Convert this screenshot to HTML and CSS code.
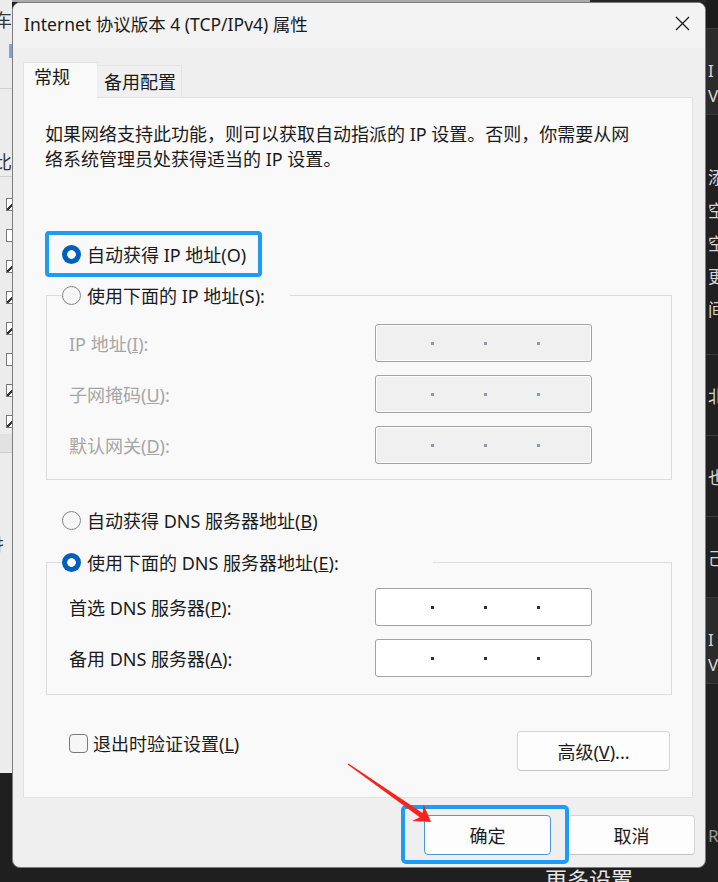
FILE: index.html
```html
<!DOCTYPE html>
<html lang="zh-CN">
<head>
    <meta charset="UTF-8">
    <meta name="viewport" content="width=device-width, initial-scale=1.0">
    <title>Internet 协议版本 4 (TCP/IPv4) 属性</title>
    <link rel="stylesheet" href="styles.css">
</head>
<body>
    <div class="screen">
        <div class="side side-left">
            <div class="bg-glyph g-top">车</div>
            <div class="bg-mark"></div>
            <div class="bg-line"></div>
            <div class="bg-glyph g-bi">比</div>
            <div class="bg-line tight"></div>
            <div class="bg-checks">
                <span class="bg-check on"></span>
                <span class="bg-check"></span>
                <span class="bg-check on"></span>
                <span class="bg-check on"></span>
                <span class="bg-check on"></span>
                <span class="bg-check"></span>
                <span class="bg-check on"></span>
                <span class="bg-check on"></span>
            </div>
            <div class="bg-band"></div>
            <div class="bg-glyph g-hand">扌</div>
        </div>

        <div class="middle">
            <div class="topline"></div>
            <div class="dialog">
                <div class="titlebar">
                    <span class="title">Internet 协议版本 4 (TCP/IPv4) 属性</span>
                    <svg class="close" width="15" height="15" viewBox="0 0 15 15">
                        <path d="M1 1 L14 14 M14 1 L1 14" stroke="#1b1b1b" stroke-width="1.3" fill="none"/>
                    </svg>
                </div>

                <div class="dialog-body">
                    <div class="tabs">
                        <div class="tab active">常规</div>
                        <div class="tab">备用配置</div>
                    </div>

                    <div class="panel">
                        <p class="desc">如果网络支持此功能，则可以获取自动指派的 IP 设置。否则，你需要从网<br>络系统管理员处获得适当的 IP 设置。</p>

                        <div class="hl-box">
                            <label class="radio-row"><span class="radio checked"></span><span>自动获得 IP 地址(O)</span></label>
                        </div>

                        <fieldset class="group disabled">
                            <legend><label class="radio-row"><span class="radio"></span><span>使用下面的 IP 地址(S):</span></label></legend>
                            <div class="fields">
                                <span class="field-label">IP 地址(<u>I</u>):</span>
                                <div class="ip"><i></i><i></i><i></i></div>
                                <span class="field-label">子网掩码(<u>U</u>):</span>
                                <div class="ip"><i></i><i></i><i></i></div>
                                <span class="field-label">默认网关(<u>D</u>):</span>
                                <div class="ip"><i></i><i></i><i></i></div>
                            </div>
                        </fieldset>

                        <label class="radio-row standalone"><span class="radio"></span><span>自动获得 DNS 服务器地址(<u>B</u>)</span></label>

                        <fieldset class="group dns">
                            <legend><label class="radio-row"><span class="radio checked"></span><span>使用下面的 DNS 服务器地址(<u>E</u>):</span></label></legend>
                            <div class="fields">
                                <span class="field-label">首选 DNS 服务器(<u>P</u>):</span>
                                <div class="ip"><i></i><i></i><i></i></div>
                                <span class="field-label">备用 DNS 服务器(<u>A</u>):</span>
                                <div class="ip"><i></i><i></i><i></i></div>
                            </div>
                        </fieldset>

                        <div class="panel-bottom">
                            <label class="check-row"><span class="checkbox"></span><span>退出时验证设置(<u>L</u>)</span></label>
                            <button class="btn btn-adv">高级(<u>V</u>)...</button>
                        </div>
                    </div>

                    <div class="footer">
                        <button class="btn btn-ok">确定</button>
                        <button class="btn">取消</button>
                    </div>
                </div>
            </div>
            <div class="under">更多设置</div>
        </div>

        <div class="side side-right">
            <div class="r-block r-dark"></div>
            <div class="r-block r-card"><span>I</span><span>Vi</span></div>
            <div class="r-block r-list"><span>添</span><span>空</span><span>空</span><span>更</span><span>间</span></div>
            <div class="r-block r-item"><span>北</span></div>
            <div class="r-block r-item"><span>也</span></div>
            <div class="r-block r-item"><span>己</span></div>
            <div class="r-block r-card"><span>I</span><span>Vi</span></div>
            <div class="r-block r-foot"><span>Re</span></div>
        </div>

        <svg class="arrow" width="718" height="882" viewBox="0 0 718 882">
            <polygon points="347.6,764.5 419.7,817.2 412.2,821 431,822 423.6,804.6 422.6,813.1 348.4,763.5" fill="#f7231c"/>
        </svg>
    </div>
</body>
</html>
```

FILE: styles.css
```css
body {
    margin: 0;
    background: #1f1f1f;
    font-family: "Noto Sans", "Noto Sans CJK SC", sans-serif;
    font-size: 18px;
    color: #1b1b1b;
    overflow: hidden;
}
.screen {
    position: relative;
    display: flex;
    width: 718px;
    height: 882px;
    overflow: hidden;
}

/* window behind the dialog */
.side {
    width: 12px;
    flex: none;
    overflow: hidden;
}
.side-left {
    height: 773px;
    background: #ececec;
    color: #333;
}
.bg-glyph {
    font-size: 18px;
    line-height: 24px;
    margin-left: -6px;
}
.g-top {
    margin-top: 8px;
}
.bg-mark {
    width: 4px;
    height: 14px;
    margin: 12px 0 0 9px;
    background: #7aa7d4;
}
.bg-line {
    height: 1px;
    background: #cfcfcf;
    margin-top: 30px;
}
.bg-line.tight {
    margin-top: 2px;
}
.g-bi {
    margin-top: 61px;
}
.bg-checks {
    display: flex;
    flex-direction: column;
    gap: 18px;
    margin-top: 21px;
}
.bg-check {
    width: 12px;
    height: 13px;
    margin-left: 6px;
    box-sizing: border-box;
    border: 1px solid #777;
    background: #fff;
}
.bg-check.on {
    background: linear-gradient(135deg, #fff 45%, #333 46% 60%, #fff 61%);
}
.bg-band {
    height: 18px;
    margin-top: 6px;
    background: #e2e2e2;
    border-bottom: 1px solid #cfcfcf;
}
.g-hand {
    margin-top: 80px;
}

.side-right {
    background: #202020;
    color: #d6d6d6;
    display: flex;
    flex-direction: column;
}
.r-block {
    display: flex;
    flex-direction: column;
    padding-left: 2px;
    font-size: 17px;
    border-bottom: 1px solid #3a3a3a;
}
.r-dark {
    height: 28px;
    background: #1b1b1b;
}
.r-card {
    height: 86px;
    box-sizing: border-box;
    padding-top: 22px;
    background: #2b2b2b;
    justify-content: center;
    line-height: 25px;
}
.r-list {
    height: 240px;
    gap: 11px;
    padding-top: 52px;
    box-sizing: border-box;
    line-height: 22px;
}
.r-item {
    height: 80px;
    justify-content: center;
}
.r-foot {
    flex: 1;
    padding-top: 140px;
    border: none;
    color: #9a9a9a;
}

.middle {
    width: 694px;
    flex: none;
    display: flex;
    flex-direction: column;
}
.topline {
    height: 2px;
    background: linear-gradient(to right, #ababab 0 578px, #262626 578px);
}
.under {
    height: 14px;
    overflow: hidden;
    padding-left: 533px;
    font-size: 22px;
    line-height: 22px;
    color: #e6e6e6;
}

/* dialog */
.dialog {
    height: 866px;
    box-sizing: border-box;
    border: 1px solid #7d7d7d;
    border-radius: 8px;
    background: #efefef;
    overflow: hidden;
    display: flex;
    flex-direction: column;
}
.titlebar {
    height: 45px;
    flex: none;
    box-sizing: border-box;
    background: #f3f3f3;
    display: flex;
    align-items: center;
    justify-content: space-between;
    padding: 0 15px 4px 11px;
}
.title {
    font-size: 17.5px;
    color: #1a1a1a;
}
.dialog-body {
    flex: 1;
    padding: 0 12px 0 10px;
}
.tabs {
    display: flex;
    align-items: flex-end;
    padding-top: 14px;
    margin-bottom: -1px;
    position: relative;
    z-index: 1;
}
.tab {
    box-sizing: border-box;
    border: 1px solid #e4e4e4;
    border-bottom: none;
    line-height: 26px;
}
.tab.active {
    width: 75px;
    height: 36px;
    padding: 1px 0 0 10px;
    background: #f9f9f9;
}
.tab:not(.active) {
    width: 85px;
    height: 33px;
    padding: 3px 0 0 7px;
    margin-left: -1px;
    border-left: none;
    background: #f0f0f0;
    border-bottom: 1px solid #e4e4e4;
}

.panel {
    background: #f9f9f9;
    border: 1px solid #e2e2e2;
    padding: 24px 20px 26px 21px;
}
.desc {
    margin: 0;
    line-height: 25px;
}

.radio-row {
    display: flex;
    align-items: center;
    gap: 6px;
    height: 26px;
    white-space: nowrap;
}
.radio {
    width: 19px;
    height: 19px;
    flex: none;
    box-sizing: border-box;
    border-radius: 50%;
    border: 1px solid #888;
    background: #f6f6f6;
}
.radio.checked {
    border: none;
    background: radial-gradient(circle, #fff 0 4px, #005fb8 4.6px);
}
.hl-box {
    width: fit-content;
    margin-top: 59px;
    padding: 6px 12px 6px 13px;
    border: 4px solid #1e9bf2;
    border-radius: 4px;
}

.group {
    margin: 5px 0 0 1px;
    padding: 16px 0 15px 22px;
    border: 1px solid #dcdcdc;
}
.group legend {
    width: 228px;
    padding: 0;
    margin-left: -7px;
}
.group.dns {
    margin-top: 16px;
    padding-top: 13px;
    padding-bottom: 17px;
}
.group.dns legend {
    width: 371px;
}
.standalone {
    margin: 27px 0 0 17px;
}
.fields {
    display: grid;
    grid-template-columns: 306px 217px;
    grid-auto-rows: 38px;
    row-gap: 13px;
    align-items: center;
}
.ip {
    height: 38px;
    box-sizing: border-box;
    border: 1px solid #a2a2a2;
    border-radius: 3px;
    background: #fff;
    display: flex;
    align-items: center;
    gap: 50px;
    padding-left: 55px;
}
.ip i {
    width: 3px;
    height: 3px;
    background: #2d2d3d;
}
.disabled .field-label {
    color: #a6a6a6;
}
.disabled .ip {
    background: #f0f0f0;
    box-shadow: inset 0 0 0 1px #fdfdfd;
}
.disabled .ip i {
    background: #8f9aa8;
}

.panel-bottom {
    display: flex;
    justify-content: space-between;
    align-items: flex-start;
    margin-top: 35px;
}
.check-row {
    display: flex;
    align-items: center;
    gap: 5px;
    height: 26px;
    margin-left: 24px;
}
.checkbox {
    width: 19px;
    height: 19px;
    box-sizing: border-box;
    border: 1px solid #7a7a7a;
    border-radius: 4px;
    background: #f6f6f6;
}

.btn {
    font: inherit;
    color: #1b1b1b;
    height: 40px;
    padding: 0;
    background: #fdfdfd;
    border: 1px solid #d6d6d6;
    border-bottom-color: #c4c4c4;
    border-radius: 4px;
}
.btn-adv {
    width: 153px;
    margin: 1px 2px 0 0;
}
.footer {
    display: flex;
    justify-content: flex-end;
    gap: 17px;
    padding: 17px 0 0;
    margin-right: -2px;
}
.footer .btn {
    width: 127px;
}
.btn-ok {
    position: relative;
    border-color: #4d95dd;
}
.btn-ok::after {
    content: "";
    position: absolute;
    top: -11px;
    left: -24px;
    right: -19px;
    bottom: -10px;
    border: 4px solid #1e9bf2;
    border-radius: 5px;
}

.arrow {
    position: absolute;
    left: 0;
    top: 0;
    pointer-events: none;
}
```
